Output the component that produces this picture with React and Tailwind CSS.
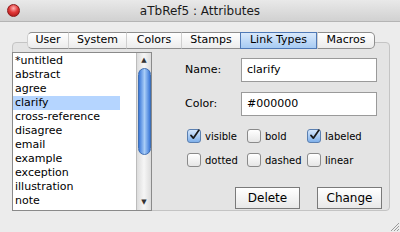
import React from 'react';

const items = ['*untitled', 'abstract', 'agree', 'clarify', 'cross-reference', 'disagree', 'email', 'example', 'exception', 'illustration', 'note'];
const tabs = [
  { label: 'User', w: 'w-[41px]' },
  { label: 'System', w: 'w-[58px]' },
  { label: 'Colors', w: 'w-[55px]' },
  { label: 'Stamps', w: 'w-[59px]' },
  { label: 'Link Types', w: 'w-[77px]', active: true },
  { label: 'Macros', w: 'w-[58px]' },
];

const Check = ({ checked }) => (
  <div className={`w-[14px] h-[14px] shrink-0 rounded-[3px] border flex items-center justify-center ${checked ? 'border-[#5a7fb0] bg-gradient-to-b from-[#d6e7fb] to-[#7fb0ea]' : 'border-[#8a8a8a] bg-gradient-to-b from-white to-[#e6e6e6]'}`}>
    {checked && (
      <svg width="14" height="14" viewBox="0 0 14 14" className="-mt-[3px] ml-[1px]">
        <path d="M2.5 7.5 L5.5 11 L12.5 1" fill="none" stroke="#1a1a1a" strokeWidth="2.2" strokeLinecap="round" strokeLinejoin="round" />
      </svg>
    )}
  </div>
);

const CheckItem = ({ label, checked, w }) => (
  <div className={`flex items-center gap-[4px] ${w}`}>
    <Check checked={checked} />
    <span>{label}</span>
  </div>
);

const App = () => {
  return (
    <div className="w-[400px] h-[232px] bg-[#ececec] text-[11px] text-black overflow-hidden relative" style={{ fontFamily: '"DejaVu Sans", sans-serif' }}>
      {/* title bar */}
      <div className="h-[22px] bg-gradient-to-b from-[#e9e9e9] to-[#d1d1d1] border-b border-[#b4b4b4] flex items-center relative">
        <div className="absolute left-[7px] top-[4px] w-[13px] h-[13px] rounded-full border border-[#8c1a1a] bg-[radial-gradient(circle_at_50%_30%,#ffb3b3_0%,#e23a3a_45%,#a01010_100%)]" />
        <div className="w-full text-center text-[12px] text-[#1a1a1a]">aTbRef5 : Attributes</div>
      </div>

      <div className="pt-[10px] pl-[12px]">
        {/* tabs */}
        <div className="relative z-10 flex h-[17px] ml-[15px]">
          {tabs.map((t, i) => (
            <div
              key={t.label}
              className={`${t.w} h-full flex items-center justify-center text-[11px] border-y ${
                t.active
                  ? 'bg-gradient-to-b from-[#d9e9fb] to-[#a7cbf3] border-[#4f79b6] border-x'
                  : 'bg-gradient-to-b from-white to-[#ececec] border-[#8e8e8e] border-l border-l-[#cfcfcf]'
              } ${i === 0 ? 'rounded-l-[5px] border-l border-l-[#8e8e8e]' : ''} ${i === tabs.length - 1 ? 'rounded-r-[5px] border-r border-r-[#8e8e8e]' : ''}`}
            >
              {t.label}
            </div>
          ))}
        </div>

        {/* group box */}
        <div className="-mt-[7px] w-[378px] h-[169px] border border-[#c4c4c4] rounded-[4px] bg-[#e4e4e4] flex">
          {/* list */}
          <div className="-ml-px mt-[9px] w-[140px] h-[159px] border border-[#8a8a8a] bg-white flex">
            <div className="flex-1 pt-[1px]">
              {items.map((it) => (
                <div key={it} className={`h-[14px] leading-[14px] pl-[2px] text-[11px] ${it === 'clarify' ? 'bg-[#b5d5ff] w-[107px]' : ''}`}>
                  {it}
                </div>
              ))}
            </div>
            <div className="w-[15px] border-l border-[#bcbcbc] bg-gradient-to-r from-[#dcdcdc] via-[#f6f6f6] to-[#dcdcdc] flex flex-col items-center">
              <div className="h-[15px] flex items-center justify-center text-[7px] text-[#333]">▲</div>
              <div className="w-[13px] h-[87px] rounded-full border border-[#3f6fb3] bg-gradient-to-r from-[#3c78d8] via-[#a9cdf7] to-[#3c78d8]" />
              <div className="flex-1" />
              <div className="h-[15px] flex items-center justify-center text-[7px] text-[#333]">▼</div>
            </div>
          </div>

          {/* form */}
          <div className="flex-1 pl-[33px] pt-[15px]">
            <div className="flex items-center h-[24px]">
              <span className="w-[56px] text-[11px]">Name:</span>
              <div className="w-[136px] h-[24px] border border-[#9a9a9a] bg-white pl-[5px] flex items-center text-[11px]">clarify</div>
            </div>
            <div className="flex items-center h-[24px] mt-[10px]">
              <span className="w-[56px] text-[11px]">Color:</span>
              <div className="w-[136px] h-[24px] border border-[#9a9a9a] bg-white pl-[5px] flex items-center text-[11px]">#000000</div>
            </div>
            <div className="flex items-center mt-[13px] ml-[2px] text-[10px] h-[14px]">
              <CheckItem label="visible" checked w="w-[60px]" />
              <CheckItem label="bold" w="w-[60px]" />
              <CheckItem label="labeled" checked />
            </div>
            <div className="flex items-center mt-[10px] ml-[2px] text-[10px] h-[14px]">
              <CheckItem label="dotted" w="w-[60px]" />
              <CheckItem label="dashed" w="w-[60px]" />
              <CheckItem label="linear" />
            </div>
            <div className="flex mt-[20px] ml-[50px] gap-[17px]">
              <div className="w-[65px] h-[22px] border border-[#7a7a7a] bg-gradient-to-b from-white to-[#e8e8e8] flex items-center justify-center text-[12px]">Delete</div>
              <div className="w-[65px] h-[22px] border border-[#7a7a7a] bg-gradient-to-b from-white to-[#e8e8e8] flex items-center justify-center text-[12px]">Change</div>
            </div>
          </div>
        </div>
      </div>

      {/* resize grip */}
      <svg className="absolute right-0 bottom-0" width="12" height="12" viewBox="0 0 12 12">
        <path d="M11 3 L3 11 M11 6 L6 11 M11 9 L9 11" stroke="#9a9a9a" strokeWidth="1" />
      </svg>
    </div>
  );
};

export default App;
